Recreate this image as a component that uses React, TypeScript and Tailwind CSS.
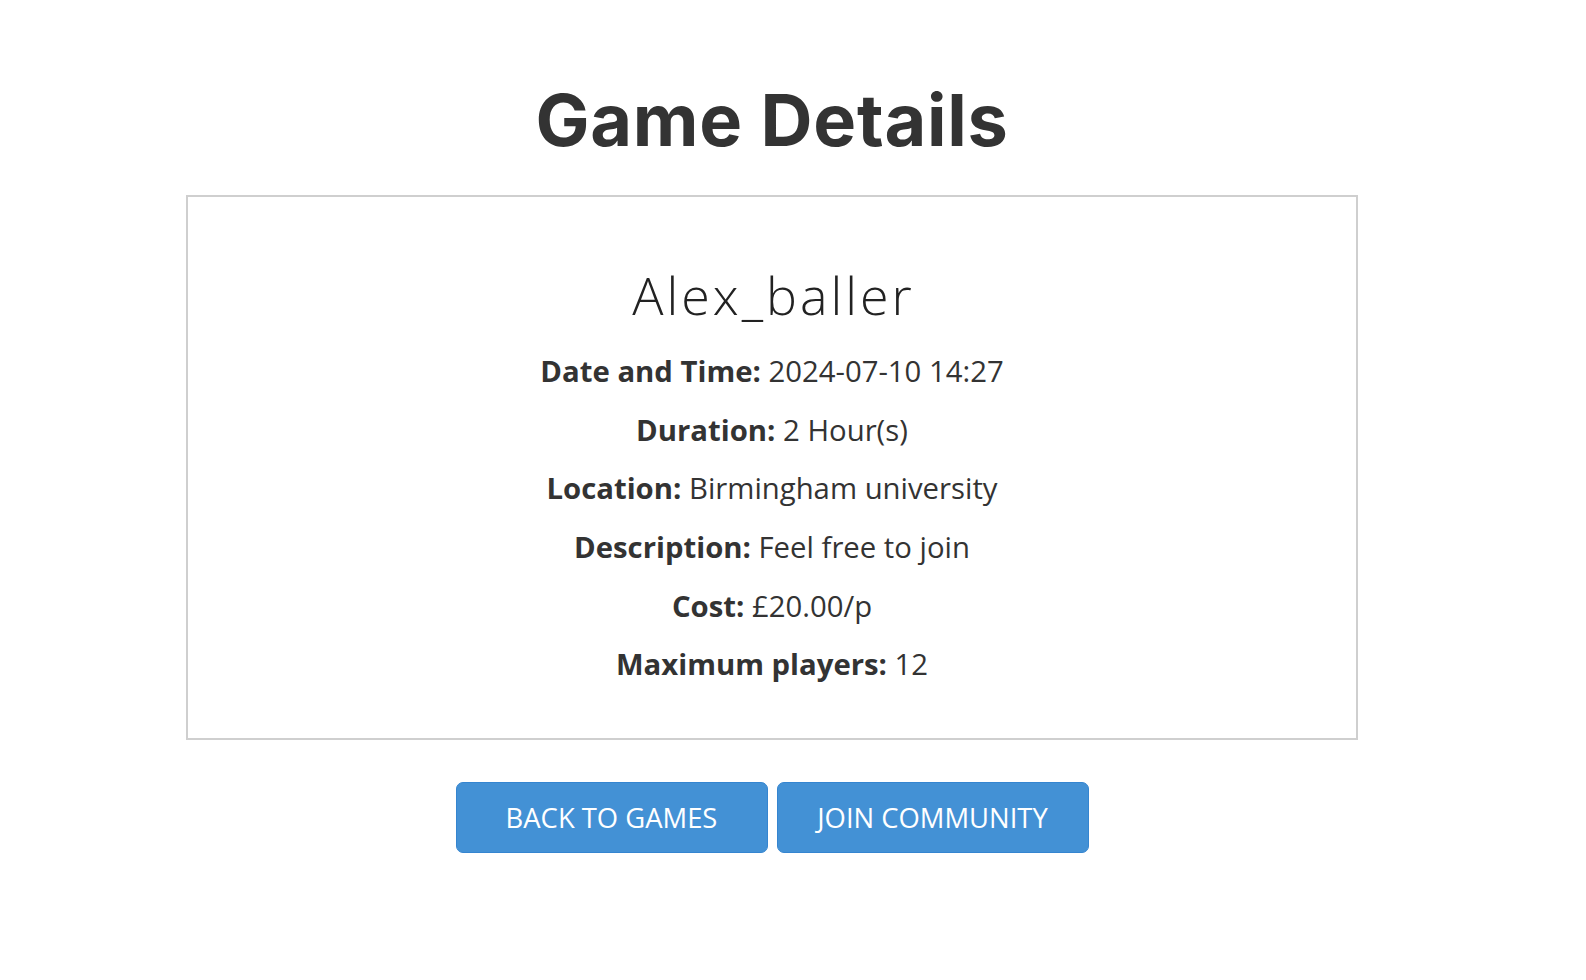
const details: Array<{ label: string; value: string }> = [
  { label: "Date and Time:", value: "2024-07-10 14:27" },
  { label: "Duration:", value: "2 Hour(s)" },
  { label: "Location:", value: "Birmingham university" },
  { label: "Description:", value: "Feel free to join" },
  { label: "Cost:", value: "£20.00/p" },
  { label: "Maximum players:", value: "12" },
];

export default function App() {
  return (
    <div className="min-h-[980px] bg-white text-[#333]" style={{ fontFamily: '"Open Sans", sans-serif' }}>
      <div className="flex w-[1544px] flex-col items-center pt-[84px]">
        <h1 className="text-[72px] font-bold leading-none tracking-[0.75px] text-[#333] [font-family:Inter,sans-serif]">
          Game Details
        </h1>

        <div className="mt-[39px] flex w-[1172px] flex-col items-center border-2 border-[#cfcfcf] pb-[52px] pt-[72px]">
          <h2 className="mb-[28px] pl-[3px] text-[52px] font-light leading-none tracking-[3px] text-[#222]">
            Alex_baller
          </h2>
          {details.map((item) => (
            <p key={item.label} className="mb-[14.7px] text-[29.3px] leading-[44px] last:mb-0">
              <span className="font-bold">{item.label}</span> {item.value}
            </p>
          ))}
        </div>

        <div className="mt-[42px] flex gap-[9px]">
          <button className="h-[71px] w-[312px] rounded-[7px] border border-[#3585d0] bg-[#4391d5] text-[27.4px] uppercase text-white">
            Back to games
          </button>
          <button className="h-[71px] w-[312px] rounded-[7px] border border-[#3585d0] bg-[#4391d5] text-[27.4px] uppercase text-white">
            Join community
          </button>
        </div>
      </div>
    </div>
  );
}
